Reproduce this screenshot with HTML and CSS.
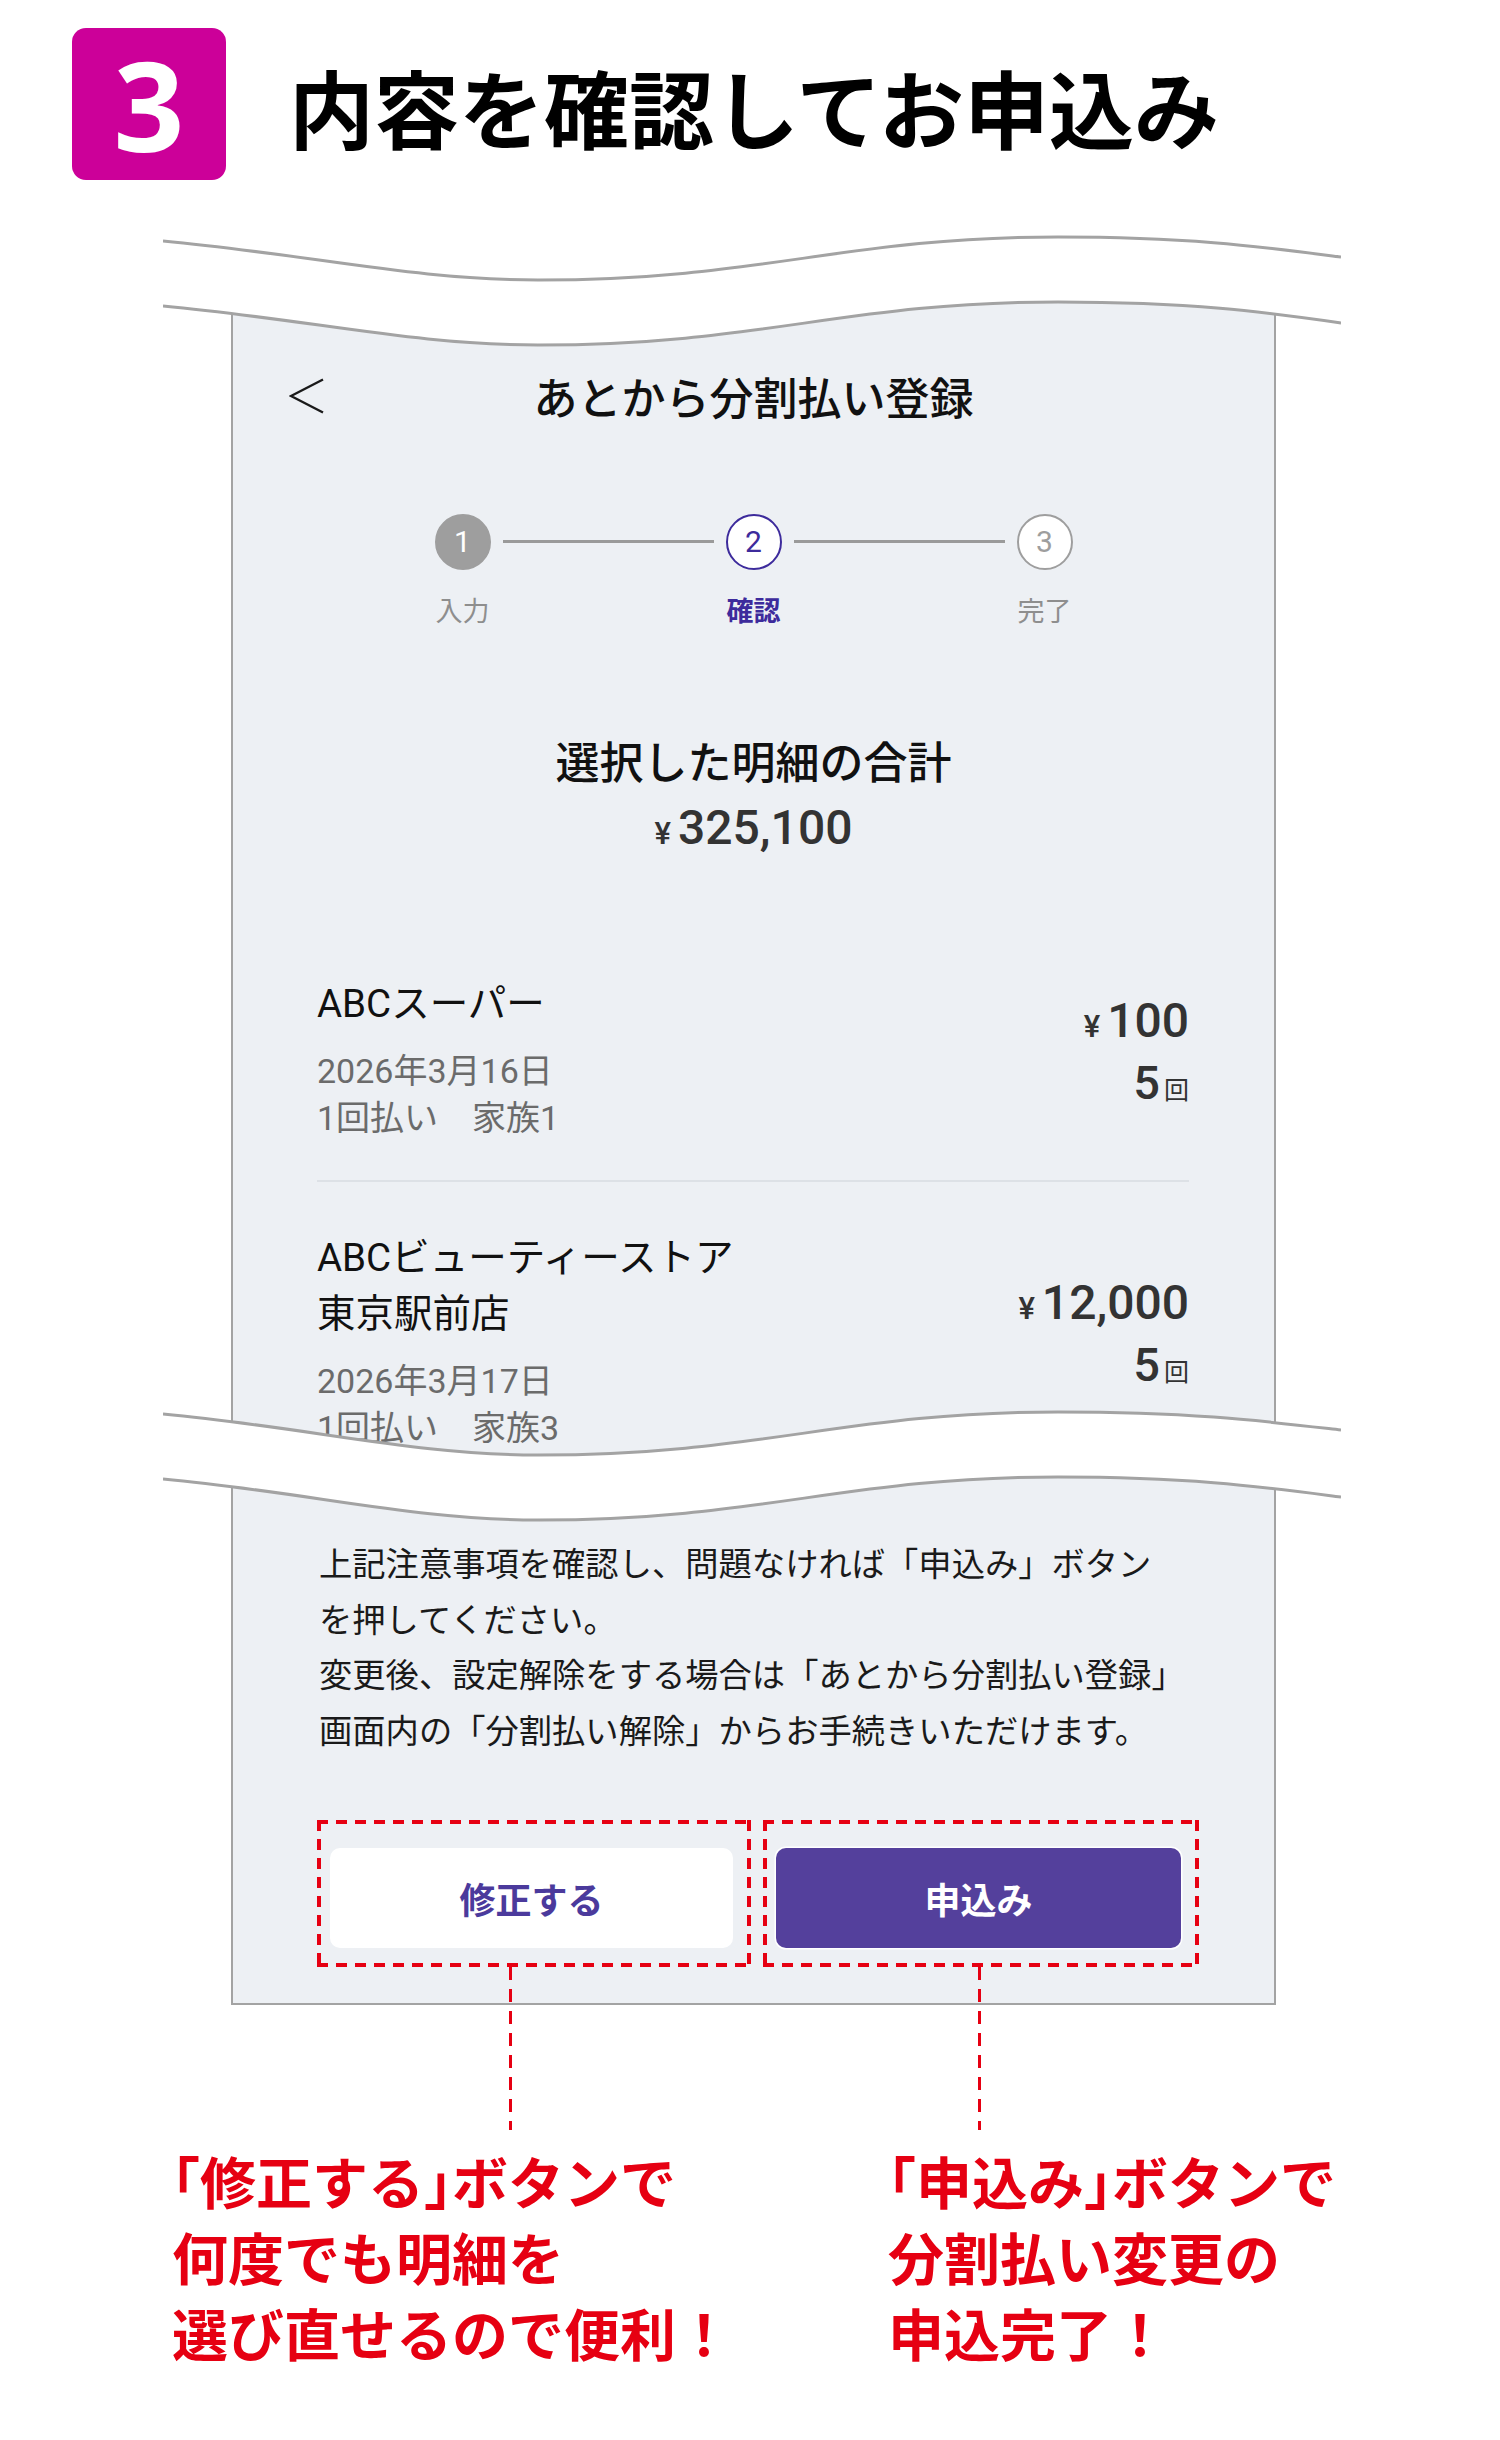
FILE: index.html
```html
<!DOCTYPE html>
<html lang="ja">
<head>
<meta charset="utf-8">
<title>内容を確認してお申込み</title>
<link rel="stylesheet" href="styles.css">
</head>
<body>
<div class="page">
  <header class="step-head">
    <div class="step-badge">3</div>
    <h1 class="step-title">内容を確認してお申込み</h1>
  </header>

  <div class="stage">
    <div class="phone">
      <div class="app-bar">
        <div class="back">
          <svg class="back-icon" viewBox="0 0 36 36" width="36" height="36"><polyline points="34,1.5 2,18 34,34.5" fill="none" stroke="#1a1a1a" stroke-width="2.4"/></svg>
        </div>
        <div class="app-title">あとから分割払い登録</div>
        <div></div>
      </div>

      <ol class="stepper">
        <li class="step step-done"><span class="dot">1</span><span class="label">入力</span></li>
        <li class="connector"></li>
        <li class="step step-current"><span class="dot">2</span><span class="label">確認</span></li>
        <li class="connector"></li>
        <li class="step step-todo"><span class="dot">3</span><span class="label">完了</span></li>
      </ol>

      <section class="summary">
        <p class="summary-title">選択した明細の合計</p>
        <p class="summary-amount"><span class="yen">¥</span>325,100</p>
      </section>

      <ul class="items">
        <li class="item">
          <div class="item-main">
            <p class="item-name">ABCスーパー</p>
            <p class="item-meta">2026年3月16日<br>1回払い　家族1</p>
          </div>
          <div class="item-side">
            <p class="item-amount"><span class="yen">¥</span>100</p>
            <p class="item-count">5<span class="unit">回</span></p>
          </div>
        </li>
        <li class="item">
          <div class="item-main">
            <p class="item-name">ABCビューティーストア<br>東京駅前店</p>
            <p class="item-meta">2026年3月17日<br>1回払い　家族3</p>
          </div>
          <div class="item-side">
            <p class="item-amount"><span class="yen">¥</span>12,000</p>
            <p class="item-count">5<span class="unit">回</span></p>
          </div>
        </li>
      </ul>

      <p class="notes">上記注意事項を確認し、問題なければ「申込み」ボタン<br>を押してください。<br>変更後、設定解除をする場合は「あとから分割払い登録」<br>画面内の「分割払い解除」からお手続きいただけます。</p>

      <div class="actions">
        <div class="action-box action-box-left">
          <button class="btn btn-secondary" type="button">修正する</button>
          <span class="leader leader-left"></span>
        </div>
        <div class="action-box action-box-right">
          <button class="btn btn-primary" type="button">申込み</button>
          <span class="leader leader-right"></span>
        </div>
      </div>
    </div>

    <svg class="cut cut-top" viewBox="0 0 1178 125" width="1178" height="125">
      <path d="M0,0 H1178 V93 C1100,82 1030,72 895,72 C680,72 600,115 375,115 C250,115 150,90 0,76 Z" fill="#ffffff"/>
      <path d="M0,11 C150,25 250,50 375,50 C600,50 680,7 895,7 C1030,7 1100,17 1178,27" fill="none" stroke="#a3a3a3" stroke-width="3"/>
      <path d="M0,76 C150,90 250,115 375,115 C600,115 680,72 895,72 C1030,72 1100,82 1178,93" fill="none" stroke="#a3a3a3" stroke-width="3"/>
    </svg>

    <svg class="cut cut-mid" viewBox="0 0 1178 125" width="1178" height="125">
      <path d="M0,9 C150,23 250,50 375,50 C600,50 680,7 895,7 C1030,7 1100,16 1178,25 V92 C1100,82 1030,72 895,72 C680,72 600,115 375,115 C250,115 150,88 0,74 Z" fill="#ffffff"/>
      <path d="M0,9 C150,23 250,50 375,50 C600,50 680,7 895,7 C1030,7 1100,16 1178,25" fill="none" stroke="#a3a3a3" stroke-width="3"/>
      <path d="M0,74 C150,88 250,115 375,115 C600,115 680,72 895,72 C1030,72 1100,82 1178,92" fill="none" stroke="#a3a3a3" stroke-width="3"/>
    </svg>
  </div>

  <div class="captions">
    <p class="caption"><span class="br">「</span>修正する<span class="br">」</span>ボタンで<br>何度でも明細を<br>選び直せるので便利！</p>
    <p class="caption"><span class="br">「</span>申込み<span class="br">」</span>ボタンで<br>分割払い変更の<br>申込完了！</p>
  </div>
</div>
</body>
</html>
```

FILE: styles.css
```css
* {
  box-sizing: border-box;
}

html, body {
  margin: 0;
  padding: 0;
  background: #ffffff;
}

body {
  font-family: "Roboto", "Noto Sans CJK JP", sans-serif;
  color: #111111;
}

p, h1, ol, ul, li {
  margin: 0;
  padding: 0;
}

ol, ul {
  list-style: none;
}

.page {
  width: 1500px;
  min-height: 2440px;
  position: relative;
}

/* ---------- step heading ---------- */
.step-head {
  display: flex;
  align-items: flex-start;
  gap: 63px;
  padding: 28px 0 0 72px;
  height: 230px;
}

.step-badge {
  width: 154px;
  height: 152px;
  border-radius: 14px;
  background: #cc0099;
  color: #ffffff;
  font-family: "Noto Sans", "Liberation Sans", sans-serif;
  font-weight: 700;
  font-size: 124px;
  line-height: 152px;
  text-align: center;
}

.step-title {
  font-family: "Noto Sans CJK JP", sans-serif;
  font-weight: 700;
  font-size: 85px;
  line-height: 85px;
  margin-top: 35px;
  color: #000000;
}

/* ---------- stage / phone ---------- */
.stage {
  position: relative;
  width: 1500px;
}

.phone {
  margin-left: 231px;
  width: 1045px;
  background: #edf0f4;
  border-left: 2px solid #a3a3a3;
  border-right: 2px solid #a3a3a3;
  border-bottom: 2px solid #a3a3a3;
  padding-bottom: 36px;
}

.cut {
  position: absolute;
  left: 163px;
  display: block;
  z-index: 2;
}

.cut-top {
  top: 0;
}

.cut-mid {
  top: 1175px;
}

/* app bar */
.app-bar {
  display: grid;
  grid-template-columns: 1fr auto 1fr;
  align-items: center;
  padding-top: 140px;
  height: 192px;
}

.back {
  padding-left: 56px;
  display: flex;
  align-items: center;
}

.back-icon {
  display: block;
}

.app-title {
  font-family: "Noto Sans CJK JP", sans-serif;
  font-weight: 500;
  font-size: 44px;
  line-height: 52px;
  color: #111111;
}

/* stepper */
.stepper {
  display: flex;
  justify-content: center;
  align-items: flex-start;
  margin-top: 92px;
}

.step {
  width: 56px;
  display: flex;
  flex-direction: column;
  align-items: center;
}

.dot {
  width: 56px;
  height: 56px;
  border-radius: 50%;
  border: 2px solid #9e9e9e;
  background: #ffffff;
  color: #9e9e9e;
  display: flex;
  align-items: center;
  justify-content: center;
  font-family: "Roboto", sans-serif;
  font-size: 30px;
  line-height: 1;
}

.label {
  margin-top: 22px;
  font-family: "Noto Sans CJK JP", sans-serif;
  font-size: 27px;
  line-height: 36px;
  white-space: nowrap;
  color: #8e8e8e;
}

.step-done .dot {
  background: #9e9e9e;
  border-color: #9e9e9e;
  color: #ffffff;
}

.step-current .dot {
  border-color: #3d2b9c;
  color: #3d2b9c;
}

.step-current .label {
  color: #3d2b9c;
  font-weight: 700;
}

.connector {
  width: 211px;
  height: 3px;
  margin: 26px 12px 0;
  background: #9a9a9a;
}

/* summary */
.summary {
  margin-top: 106px;
  text-align: center;
}

.summary-title {
  font-family: "Noto Sans CJK JP", sans-serif;
  font-weight: 500;
  font-size: 44px;
  line-height: 52px;
  color: #111111;
}

.summary-amount {
  margin-top: 14px;
  font-family: "Roboto", sans-serif;
  font-weight: 500;
  font-size: 48px;
  line-height: 56px;
  color: #333333;
}

.yen {
  font-size: 31px;
  margin-right: 7px;
}

/* items */
.items {
  margin-top: 66px;
  padding: 0 85px 0 84px;
}

.item {
  display: flex;
  justify-content: space-between;
  border-bottom: 2px solid #dde1e6;
}

.item:last-child {
  border-bottom: none;
}

.item-main {
  padding: 48px 0 38px;
}

.item-name {
  font-size: 38.5px;
  line-height: 56px;
  color: #111111;
}

.item-meta {
  margin-top: 16px;
  font-size: 34px;
  line-height: 47px;
  color: #6b6b6b;
}

.item-side {
  align-self: center;
  text-align: right;
  font-family: "Roboto", sans-serif;
  color: #333333;
  font-weight: 500;
}

.item-amount {
  font-size: 48px;
  line-height: 52px;
}

.item-count {
  margin-top: 4px;
  font-size: 47px;
  line-height: 52px;
}

.unit {
  font-family: "Noto Sans CJK JP", sans-serif;
  font-size: 25px;
  font-weight: 400;
  margin-left: 4px;
}

/* notes */
.notes {
  margin-top: 47px;
  padding: 0 40px 0 86px;
  font-size: 33.3px;
  line-height: 55.5px;
  color: #1a1a1a;
  white-space: nowrap;
}

/* actions */
.actions {
  margin-top: 61px;
  padding-left: 84px;
  display: grid;
  grid-template-columns: 434px 436px;
  gap: 12px;
}

.action-box {
  position: relative;
  padding: 28px 18px 19px 13px;
  background:
    repeating-linear-gradient(90deg, #e60012 0 11px, transparent 11px 19px) left top / 100% 4px no-repeat,
    repeating-linear-gradient(90deg, #e60012 0 11px, transparent 11px 19px) left bottom / 100% 4px no-repeat,
    repeating-linear-gradient(180deg, #e60012 0 11px, transparent 11px 19px) left top / 4px 100% no-repeat,
    repeating-linear-gradient(180deg, #e60012 0 11px, transparent 11px 19px) right top / 4px 100% no-repeat;
}

.btn {
  display: block;
  width: 100%;
  height: 100px;
  border-radius: 10px;
  border: none;
  font-family: "Noto Sans CJK JP", sans-serif;
  font-weight: 700;
  font-size: 36px;
  cursor: pointer;
}

.btn-secondary {
  background: #ffffff;
  color: #4b3a9c;
}

.btn-primary {
  background: #54409c;
  color: #ffffff;
  box-shadow: 0 0 0 1.5px #ffffff;
}

.leader {
  position: absolute;
  top: 100%;
  width: 3px;
  height: 163px;
  background: repeating-linear-gradient(180deg, #e60012 0 13px, transparent 13px 22px);
  z-index: 3;
}

.leader-left {
  left: 192px;
}

.leader-right {
  left: 215px;
}

/* captions */
.captions {
  margin-top: 137px;
  padding-left: 172px;
  display: grid;
  grid-template-columns: 716px auto;
}

.caption {
  font-family: "Noto Sans CJK JP", sans-serif;
  font-weight: 700;
  font-size: 56px;
  line-height: 76px;
  color: #e60012;
  white-space: nowrap;
}

.caption .br {
  font-feature-settings: "halt";
}
```
